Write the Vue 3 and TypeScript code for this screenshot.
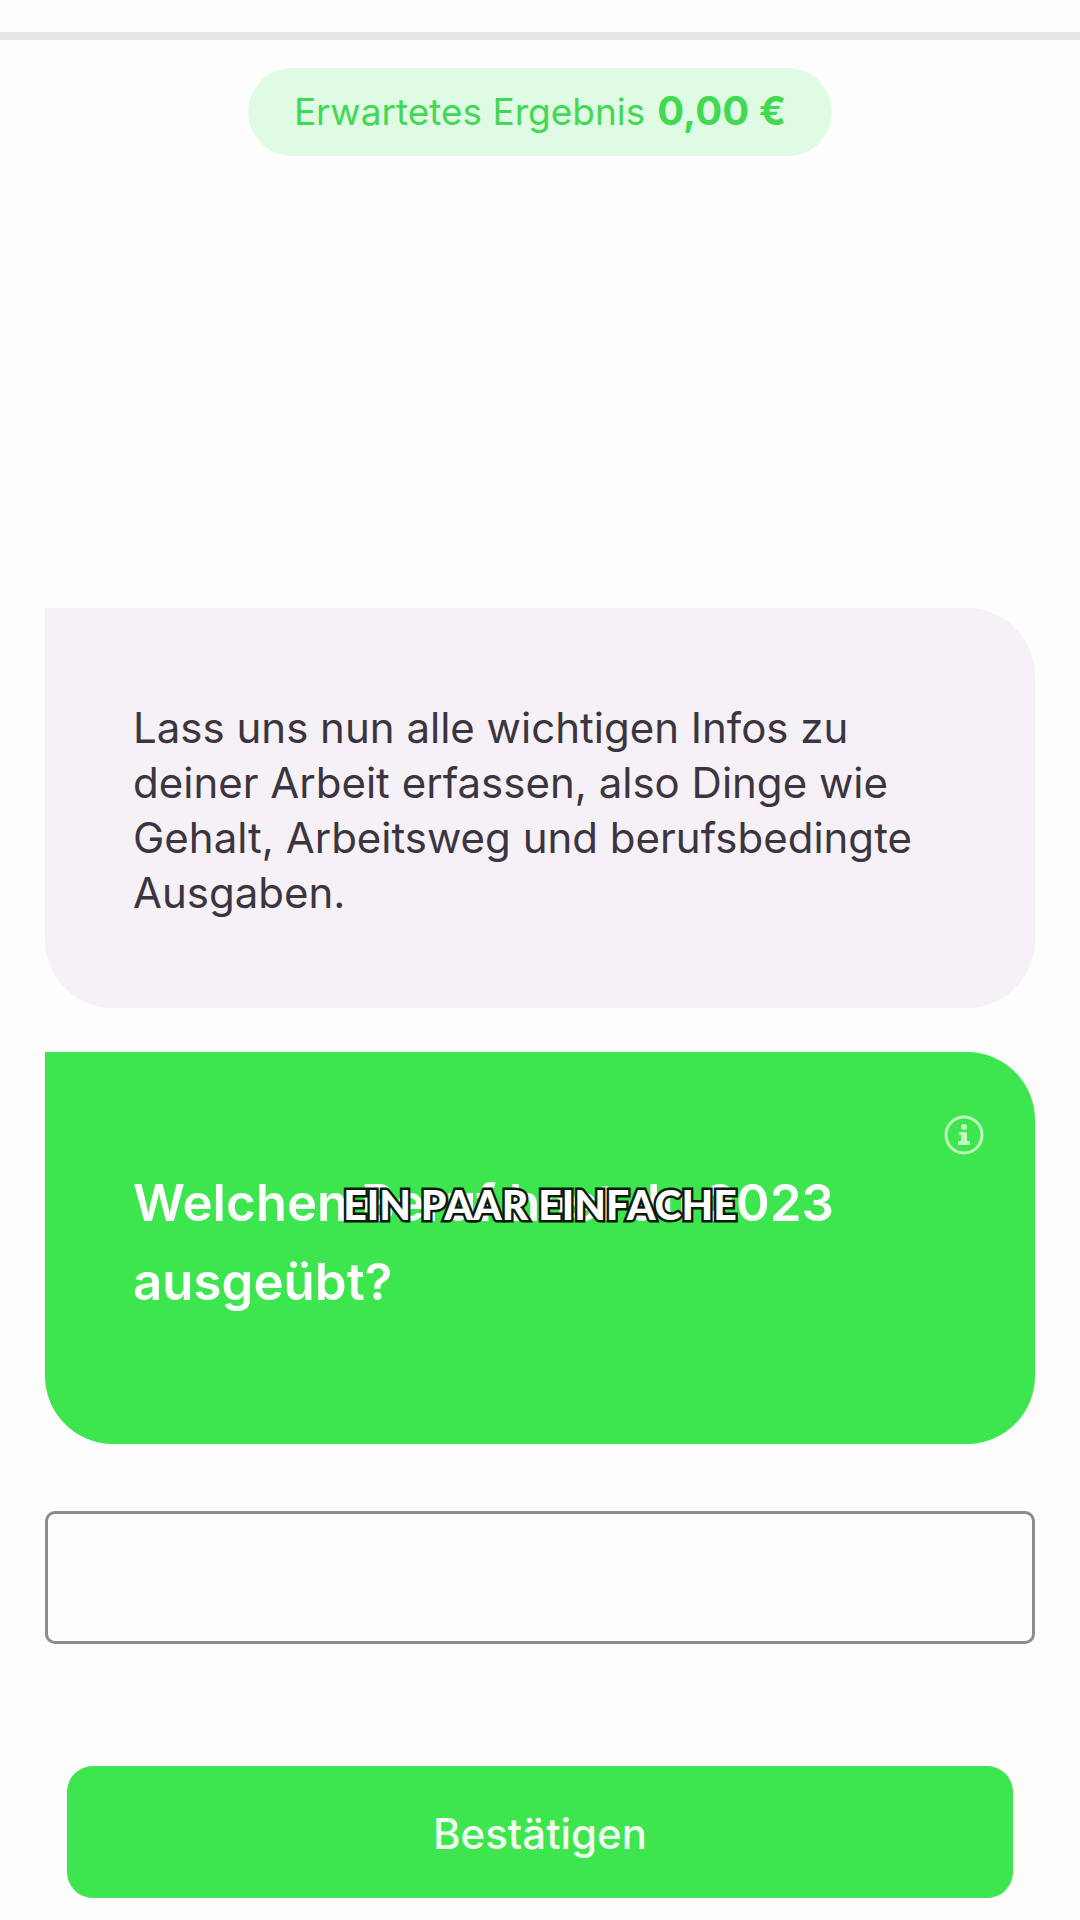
<script setup lang="ts">
import { ref } from 'vue'

const occupation = ref('')
const expectedResult = '0,00 €'
const caption = 'EIN PAAR EINFACHE'
</script>

<template>
  <div class="page">
    <header class="topbar"></header>

    <main class="content">
      <p class="result">Erwartetes Ergebnis <strong>{{ expectedResult }}</strong></p>

      <form class="chat" @submit.prevent>
        <p class="bubble intro">
          Lass uns nun alle wichtigen Infos zu deiner Arbeit erfassen, also Dinge wie Gehalt,
          Arbeitsweg und berufsbedingte Ausgaben.
        </p>

        <div class="bubble question">
          <label for="occupation">Welchen Beruf hast du 2023 ausgeübt?</label>
          <button class="info" type="button" aria-label="Info">
            <svg viewBox="0 0 40 40" fill="none" aria-hidden="true">
              <circle cx="20" cy="20" r="18" stroke="currentColor" stroke-width="3" />
              <circle cx="20" cy="12" r="3" fill="currentColor" />
              <path d="M15 17h8v9h3v4H14v-4h3v-6h-2z" fill="currentColor" />
            </svg>
          </button>
          <span class="caption">{{ caption }}</span>
        </div>

        <input id="occupation" v-model="occupation" class="field" type="text" />

        <button class="confirm" type="submit">Bestätigen</button>
      </form>
    </main>
  </div>
</template>

<style>
body {
  background: #fdfdfd;
}
</style>

<style scoped>
.page {
  font-family: Inter, 'Liberation Sans', sans-serif;
  color: #3c3540;
}

.topbar {
  box-sizing: border-box;
  height: 40px;
  border-bottom: 8px solid #e7e5e8;
}

.content {
  display: flex;
  flex-direction: column;
  align-items: center;
  padding: 28px 45px 22px;
}

.result {
  display: flex;
  align-items: baseline;
  justify-content: center;
  gap: 12px;
  box-sizing: border-box;
  margin: 0;
  padding: 22px 46px;
  border-radius: 44px;
  background: #e0fbe4;
  color: #43d854;
  font-size: 37px;
  line-height: 44px;
  white-space: nowrap;
}

.result strong {
  font-size: 40px;
  font-weight: 700;
  line-height: 40px;
}

.chat {
  display: flex;
  flex-direction: column;
  width: 100%;
  margin-top: 452px;
}

.bubble {
  margin: 0 0 44px;
  border-radius: 0 68px 68px 68px;
}

.intro {
  padding: 92px 88px 88px;
  background: #f5f1f7;
  font-size: 42px;
  line-height: 55px;
}

.question {
  position: relative;
  margin-bottom: 67px;
  padding: 111px 88px 123px;
  background: #3de64f;
  color: #fff;
  font-size: 51px;
  font-weight: 600;
  line-height: 79px;
}

.question label {
  display: block;
}

.info {
  position: absolute;
  top: 63px;
  right: 51px;
  width: 40px;
  height: 40px;
  padding: 0;
  border: 0;
  background: none;
  color: #c0fbbd;
}

.info svg {
  display: block;
  width: 100%;
  height: 100%;
}

.caption {
  position: absolute;
  top: 130px;
  left: 0;
  right: 0;
  color: #fff;
  font-family: Lato, sans-serif;
  font-size: 41px;
  font-weight: 900;
  line-height: 46px;
  text-align: center;
  white-space: nowrap;
  -webkit-text-stroke: 5px #0c1a0e;
  paint-order: stroke fill;
}

.field {
  box-sizing: border-box;
  width: 100%;
  height: 133px;
  padding: 0 42px;
  border: 3px solid #8c8c8c;
  border-radius: 10px;
  background: transparent;
  color: inherit;
  font: inherit;
  font-size: 42px;
}

.confirm {
  height: 132px;
  margin: 122px 22px 0;
  padding: 2px 0 0;
  border: 0;
  border-radius: 26px;
  background: #3de64f;
  color: #f0fff0;
  font: inherit;
  font-size: 42px;
  font-weight: 500;
}
</style>
